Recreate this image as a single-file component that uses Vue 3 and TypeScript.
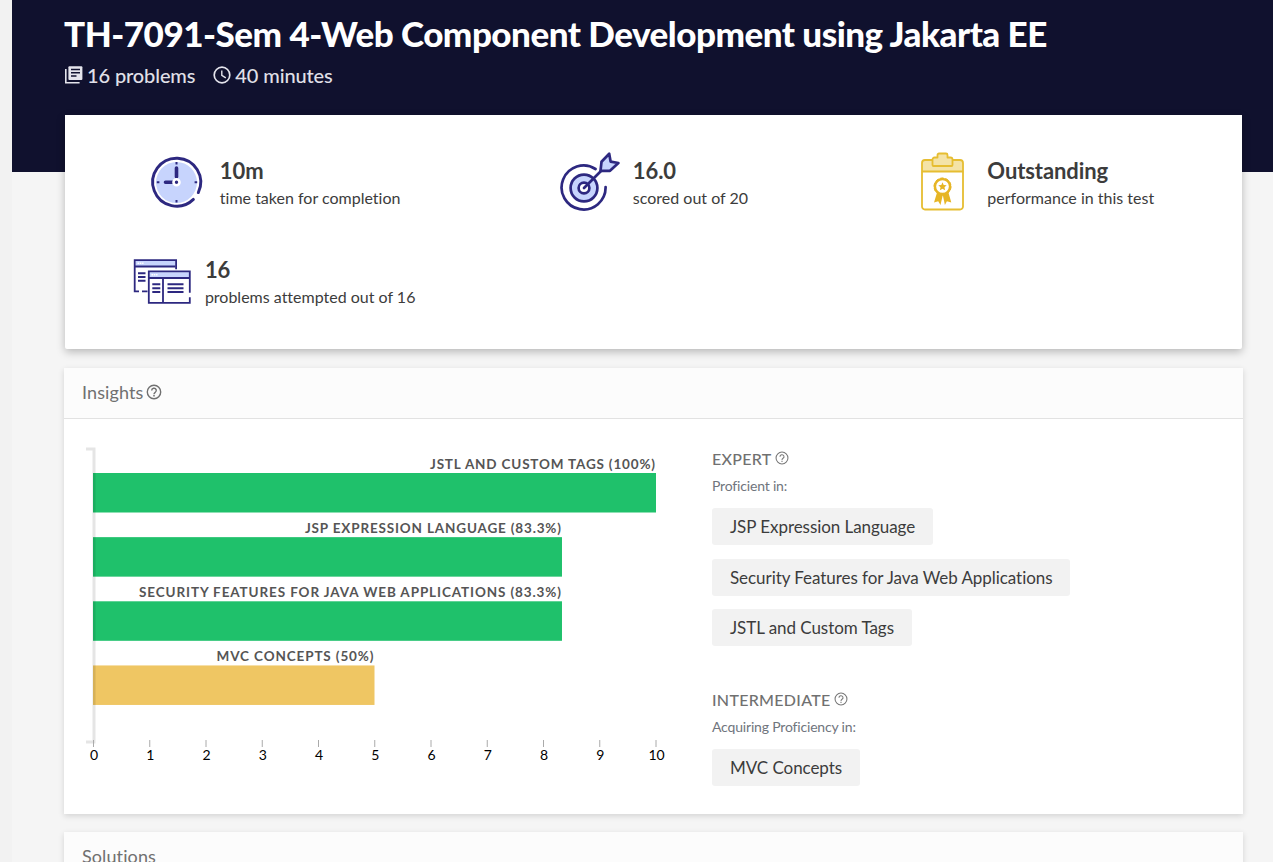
<script setup lang="ts">
interface Bar {
  label: string
  value: number
  color: string
  labelWidth: number
}

const bars: Bar[] = [
  { label: 'JSTL AND CUSTOM TAGS (100%)', value: 10, color: '#1fc16b', labelWidth: 225 },
  { label: 'JSP EXPRESSION LANGUAGE (83.3%)', value: 8.33, color: '#1fc16b', labelWidth: 256 },
  { label: 'SECURITY FEATURES FOR JAVA WEB APPLICATIONS (83.3%)', value: 8.33, color: '#1fc16b', labelWidth: 422 },
  { label: 'MVC CONCEPTS (50%)', value: 5, color: '#efc663', labelWidth: 157 },
]
const unit = 56.3
const ticks = Array.from({ length: 11 }, (_, i) => i)

const levels = [
  {
    name: 'EXPERT',
    caption: 'Proficient in:',
    skills: ['JSP Expression Language', 'Security Features for Java Web Applications', 'JSTL and Custom Tags'],
  },
  { name: 'INTERMEDIATE', caption: 'Acquiring Proficiency in:', skills: ['MVC Concepts'] },
]
</script>

<template>
  <div class="page">
    <main class="content">
      <header class="hero">
        <h1>TH-7091-Sem 4-Web Component Development using Jakarta EE</h1>
        <div class="meta">
          <svg class="meta-icon" width="18" height="18" viewBox="0 0 18 18">
            <path d="M0.8 3v13.7H14.6" fill="none" stroke="#e4e4ec" stroke-width="1.6" />
            <rect x="3.4" y="0.3" width="14" height="13.6" rx="1" fill="#e4e4ec" />
            <path d="M6 3.6h9M6 6.8h9M6 10h5.5" stroke="#10112e" stroke-width="1.5" />
          </svg>
          <span class="problems">16 problems</span>
          <svg class="meta-icon" width="18" height="18" viewBox="0 0 18 18">
            <circle cx="9" cy="9" r="7.8" fill="none" stroke="#e4e4ec" stroke-width="1.7" />
            <path d="M8.8 4.4v5l4 2.4" fill="none" stroke="#e4e4ec" stroke-width="1.4" />
          </svg>
          <span class="minutes">40 minutes</span>
        </div>
      </header>

      <section class="card stats">
        <div class="stat">
          <svg width="60" height="60" viewBox="0 0 60 60">
            <circle cx="30.5" cy="30.5" r="20.5" fill="#c7d4fd" />
            <path d="M47.400 47.400A24 24 0 1 1 52.300 40.600" fill="none" stroke="#2d2880" stroke-width="2.900" stroke-linecap="round" />
            <path d="M30.500 16v9M19.500 30.300h7" stroke="#2d2880" stroke-width="3.600" stroke-linecap="round" />
            <path d="M30.500 10v2.600M30.500 48v2.600M10.800 30.300h2.600M48.600 30.300h2.600" stroke="#2d2880" stroke-width="2" />
            <circle cx="30.500" cy="30.300" r="3" fill="#2d2880" stroke="#fff" stroke-width="2.600" />
          </svg>
          <div><strong>10m</strong><p>time taken for completion</p></div>
        </div>
        <div class="stat target">
          <svg width="60" height="60" viewBox="0 0 60 60">
            <g fill="none" stroke="#2d2880" stroke-width="2.700" stroke-linecap="round" stroke-linejoin="round">
              <path d="M35.500 17A22 22 0 1 0 45.600 35" />
              <circle cx="24" cy="36" r="13.400" fill="#c7d4fd" />
              <circle cx="24" cy="36" r="5.400" fill="#fff" />
              <path d="M24 36L48 12" />
              <path d="M40.500 18.800L41.500 9.800L49.200 1.800L50.600 9.600L58.400 11L50 18.800Z" fill="#c7d4fd" />
            </g>
          </svg>
          <div><strong>16.0</strong><p>scored out of 20</p></div>
        </div>
        <div class="stat">
          <svg width="60" height="60" viewBox="0 0 60 60">
            <g fill="none" stroke="#e6bd31" stroke-width="1.800" stroke-linejoin="round">
              <path d="M9 19.500V11a3 3 0 0 1 3-3h35a3 3 0 0 1 3 3v8.500z" fill="#f4e3a7" />
              <path d="M9 19.500V54.500a3 3 0 0 0 3 3h35a3 3 0 0 0 3-3V19.500" />
              <path d="M19.500 13V7.500a2 2 0 0 1 2-2h3V3a1.500 1.500 0 0 1 1.500-1.500h7A1.500 1.500 0 0 1 34.500 3v2.500h3a2 2 0 0 1 2 2V13a1 1 0 0 1-1 1h-18a1 1 0 0 1-1-1z" fill="#f4e3a7" />
            </g>
            <path d="M24.500 39L21 50.500l4.200-1.300 2.300 3.800 2.300-10 2.100 10 2-3.800 4.400 1.300L35 39z" fill="#e6b525" />
            <circle cx="29.500" cy="34.500" r="7.600" fill="#fff" stroke="#e6b525" stroke-width="2.500" />
            <circle cx="29.500" cy="34.500" r="8.500" fill="none" stroke="#e6b525" stroke-width="1" stroke-dasharray="3.500 1.840" />
            <path d="M29.500 30.300l1.200 2.700 3 .3-2.200 2 .6 2.900-2.600-1.500-2.600 1.500.6-2.900-2.200-2 3-.3z" fill="#e6b525" />
          </svg>
          <div><strong>Outstanding</strong><p>performance in this test</p></div>
        </div>
        <div class="stat">
          <svg width="60" height="60" viewBox="0 0 60 60">
            <g fill="none" stroke="#2d2880" stroke-width="1.800" transform="translate(.5 .3)">
              <rect x="4" y="9.300" width="40" height="5.400" fill="#c7d4fd" stroke="none" />
              <path d="M44.600 18V8.800H3.200V40H7.500M10.500 40H16" />
              <path d="M3 15.200h41" />
              <path d="M6.500 22h7.500M6.500 25.800h7.500M6.500 29.400h7.500" stroke-width="2" />
              <rect x="17.200" y="20.200" width="41" height="31.500" fill="#fff" stroke="none" />
              <rect x="18" y="20.800" width="40" height="5.400" fill="#c7d4fd" stroke="none" />
              <path d="M58.300 41.500V20.100H17.300V51.500H58.300V46M17.300 26.700h41M31.500 27v24" />
              <path d="M20.800 33h8M20.800 37h8M20.800 40.600h8M36 33h16M36 37h16M36 40.600h16" stroke-width="2" />
              <path d="M6 12h6M20 23.500h6" stroke="#fff" stroke-width="1.600" stroke-dasharray="1.600 .7" />
            </g>
          </svg>
          <div><strong>16</strong><p>problems attempted out of 16</p></div>
        </div>
      </section>

      <section class="card panel">
        <h2>
          Insights
          <svg width="16" height="16" viewBox="0 0 16 16" fill="none" stroke="#707070">
            <circle cx="8" cy="8" r="6.700" stroke-width="1.400" />
            <path d="M5.700 6.500a2.300 2.200 0 1 1 3.500 1.800C8.300 8.900 8 9.300 8 10.200" stroke-width="1.400" />
            <path d="M8 11v1.500" stroke-width="1.500" />
          </svg>
        </h2>
        <div class="insights">
          <svg class="chart" width="600" height="330" viewBox="0 0 600 330">
            <g v-for="(bar, i) in bars" :key="bar.label">
              <rect x="11" :y="34 + i * 64.150" :width="bar.value * unit" height="39.500" :fill="bar.color" />
              <text class="bar-label" :x="10 + bar.value * unit" :y="29.500 + i * 64" text-anchor="end" :textLength="bar.labelWidth">{{ bar.label }}</text>
            </g>
            <path d="M4 10h8v293H4" fill="none" stroke="#000" stroke-opacity=".1" stroke-width="3" />
            <g v-for="tick in ticks" :key="tick">
              <path :d="`M${11.500 + tick * 56.250} 301v7`" stroke="#aaa" />
              <text class="tick" :x="12 + tick * 56.250" y="321" text-anchor="middle">{{ tick }}</text>
            </g>
          </svg>
          <div class="levels">
            <section v-for="level in levels" :key="level.name" class="level">
              <h3>
                {{ level.name }}
                <svg width="14" height="14" viewBox="0 0 16 16" fill="none" stroke="#777">
                  <circle cx="8" cy="8" r="6.800" stroke-width="1.200" />
                  <path d="M5.700 6.500a2.300 2.200 0 1 1 3.500 1.800C8.300 8.900 8 9.300 8 10.200M8 11.200v1.300" stroke-width="1.200" />
                </svg>
              </h3>
              <p>{{ level.caption }}</p>
              <div v-for="skill in level.skills" :key="skill" class="chip">{{ skill }}</div>
            </section>
          </div>
        </div>
      </section>

      <section class="card panel solutions"><h2>Solutions</h2></section>
    </main>
  </div>
</template>

<style>
body { margin: 0; overflow: hidden; }
</style>

<style scoped>
.page {
  height: 862px;
  overflow: hidden;
  box-sizing: border-box;
  padding-left: 12px;
  background: linear-gradient(90deg, #f2f2f2 12px, #f5f5f5 12px);
  font-family: Lato, sans-serif;
  font-variant-ligatures: none;
  color: #3c3c3c;
}
.content { padding: 0 30px 0 52px; }
.hero {
  height: 172px;
  margin: 0 -30px -57px -52px;
  padding: 12px 30px 0 52px;
  box-sizing: border-box;
  background: #10112e;
  color: #fff;
}
h1, h2, h3, p { margin: 0; }
h1 { font-size: 35px; line-height: 43px; font-weight: 900; letter-spacing: -.5px; white-space: nowrap; }
.meta { display: flex; align-items: center; margin-top: 7px; height: 26px; font-size: 20px; font-weight: 500; letter-spacing: -.12px; color: #e0e0e8; white-space: nowrap; }
.meta-icon { margin-left: 1px; }
.problems { margin-left: 4px; margin-right: 17px; }
.minutes { margin-left: 4px; }
.card { position: relative; background: #fff; box-shadow: 0 2px 6px rgba(0, 0, 0, .14); }
.stats {
  height: 234px;
  margin: 0 1px 19px 1px;
  box-sizing: border-box;
  padding: 37px 18px 0;
  display: grid;
  grid-template-columns: repeat(3, 380.300px);
  grid-auto-rows: 99px;
  justify-items: center;
  border-radius: 0 0 2px 2px;
  box-shadow: 0 3px 8px rgba(0, 0, 0, .25);
}
.stat { display: flex; align-items: flex-start; gap: 14px; white-space: nowrap; }
.stat.target { gap: 13px; padding-left: 1px; }
.stat strong { display: block; font-size: 22px; line-height: 28px; margin-top: 5px; font-weight: 700; letter-spacing: -.1px; }
.stat p { font-size: 16px; line-height: 24px; margin-top: 1px; }
.panel + .panel { margin-top: 18px; }
.panel h2 {
  height: 51px;
  box-sizing: border-box;
  display: flex;
  align-items: center;
  gap: 3px;
  padding: 0 0 2px 18px;
  background: #fcfcfc;
  border-bottom: 1px solid #e2e2e2;
  font-size: 18px;
  font-weight: 400;
  letter-spacing: .1px;
  color: #707070;
}
.insights { height: 395px; display: flex; padding: 20px 18px 0; box-sizing: border-box; }
.chart { flex: none; overflow: visible; }
.bar-label { font-size: 13.500px; font-weight: 700; fill: #555; }
.tick { font-size: 14px; fill: #000; }
.levels { margin-left: 30px; padding-top: 7px; }
.level { margin-bottom: 41px; }
h3 { display: flex; align-items: center; gap: 3px; height: 24px; font-size: 16px; font-weight: 500; letter-spacing: .3px; color: #707070; }
h3 svg { margin-top: -1px; }
.level p { height: 22px; line-height: 22px; margin: 5px 0 11px; font-size: 14px; letter-spacing: -.18px; color: #70757d; font-variant-ligatures: normal; }
.chip {
  width: max-content;
  height: 37px;
  line-height: 37px;
  padding: 0 18px;
  margin-bottom: 13.500px;
  border-radius: 3px;
  background: #f2f2f2;
  font-size: 17px;
  letter-spacing: -.06px;
}
.solutions { height: 80px; }
</style>
